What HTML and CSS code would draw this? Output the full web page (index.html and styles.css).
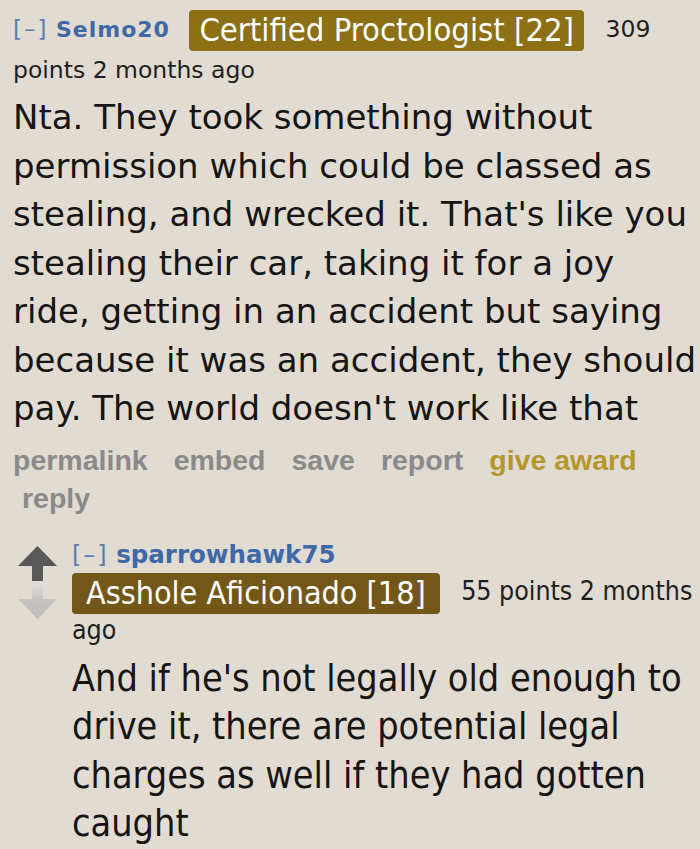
FILE: index.html
```html
<!DOCTYPE html>
<html>
<head>
<meta charset="utf-8">
<link rel="stylesheet" href="styles.css">
</head>
<body>
<div class="comment">
  <p class="tagline"><span class="expand">[–]</span> <span class="author">Selmo20</span> <span class="flair flair-gold">Certified Proctologist [22]</span> <span class="score">309 points</span> <span class="time">2 months ago</span></p>
  <div class="md">Nta. They took something without permission which could be classed as stealing, and wrecked it. That's like you stealing their car, taking it for a joy ride, getting in an accident but saying because it was an accident, they should pay. The world doesn't work like that</div>
  <ul class="buttons">
    <li>permalink</li>
    <li>embed</li>
    <li>save</li>
    <li>report</li>
    <li class="award">give award</li>
    <li class="reply">reply</li>
  </ul>
  <div class="child">
    <div class="votes">
      <svg class="arrow" width="42" height="76" viewBox="0 0 42 76">
        <defs>
          <linearGradient id="fade" x1="0" y1="0" x2="0" y2="1">
            <stop offset="0" stop-color="#dcdad6"/>
            <stop offset="0.45" stop-color="#c4c3c0"/>
            <stop offset="1" stop-color="#bfbebb"/>
          </linearGradient>
        </defs>
        <path d="M20.5 0 L40 20 L26 20 L26 35 L15 35 L15 20 L1 20 Z" fill="#585858"/>
        <path d="M15 40 L26 40 L26 53 L40 53 L20.5 73 L1 53 L15 53 Z" fill="url(#fade)"/>
      </svg>
    </div>
    <div class="entry">
      <p class="tagline child-tagline"><span class="expand">[–]</span> <span class="author">sparrowhawk75</span> <span class="flair flair-brown">Asshole Aficionado [18]</span> <span class="score">55 points</span> <span class="time">2 months ago</span></p>
      <div class="md md-child">And if he's not legally old enough to drive it, there are potential legal charges as well if they had gotten caught</div>
    </div>
  </div>
</div>
</body>
</html>
```
FILE: styles.css
```css
html, body {
  margin: 0;
  padding: 0;
  background: #e1dbd2;
}

body {
  font-family: "DejaVu Sans", Verdana, sans-serif;
  color: #222;
  width: 700px;
  height: 849px;
  overflow: hidden;
}

.comment {
  padding: 10px 0 0 13px;
}

.tagline {
  margin: 0;
  font-size: 23.5px;
  line-height: 38px;
  color: #1e1e1e;
  width: 686px;
}

.expand {
  color: #5a7db2;
  font-size: 23px;
  letter-spacing: 2px;
}

.author {
  color: #3d6aa6;
  font-weight: bold;
  font-size: 22px;
  letter-spacing: 1px;
}

.flair {
  display: inline-block;
  color: #fff;
  font-stretch: condensed;
  font-size: 32.5px;
  line-height: 36px;
  padding: 2px 10px 3px;
  border-radius: 4px;
  vertical-align: middle;
  margin: 0 14px 0 12px;
}

.flair-gold {
  background: #8d6f14;
}

.flair-brown {
  background: #735719;
}

.md {
  font-size: 34px;
  line-height: 48.5px;
  color: #151515;
  margin-top: 4px;
  padding-right: 0;
}

.buttons {
  list-style: none;
  margin: 8px 0 0 0;
  padding: 0;
  display: flex;
  flex-wrap: wrap;
  font-family: "Liberation Sans", Arial, sans-serif;
  font-weight: bold;
  font-size: 28.5px;
  line-height: 38px;
  color: #8a8a8b;
  column-gap: 26px;
}

.buttons .award {
  color: #b5972b;
}

.buttons .reply {
  padding-left: 9px;
}

.child {
  display: flex;
  margin-top: 20px;
}

.votes {
  width: 59px;
  padding-left: 4px;
  padding-top: 9px;
  box-sizing: border-box;
  flex: none;
}

.arrow {
  display: block;
}

.entry {
  flex: 1;
  min-width: 0;
}

.child-tagline {
  width: 628px;
  line-height: 36px;
}

.child-tagline .expand {
  font-size: 24px;
}

.child-tagline .author {
  font-size: 24.5px;
  letter-spacing: 0;
}

.child-tagline .flair {
  margin: -2px 14px -2px 0;
  font-size: 32px;
  padding: 2px 14px 3px;
}

.child-tagline .score,
.child-tagline .time {
  font-stretch: condensed;
  font-size: 26.5px;
}

.md-child {
  font-stretch: condensed;
  font-size: 37.5px;
  margin-top: 5px;
}
```
